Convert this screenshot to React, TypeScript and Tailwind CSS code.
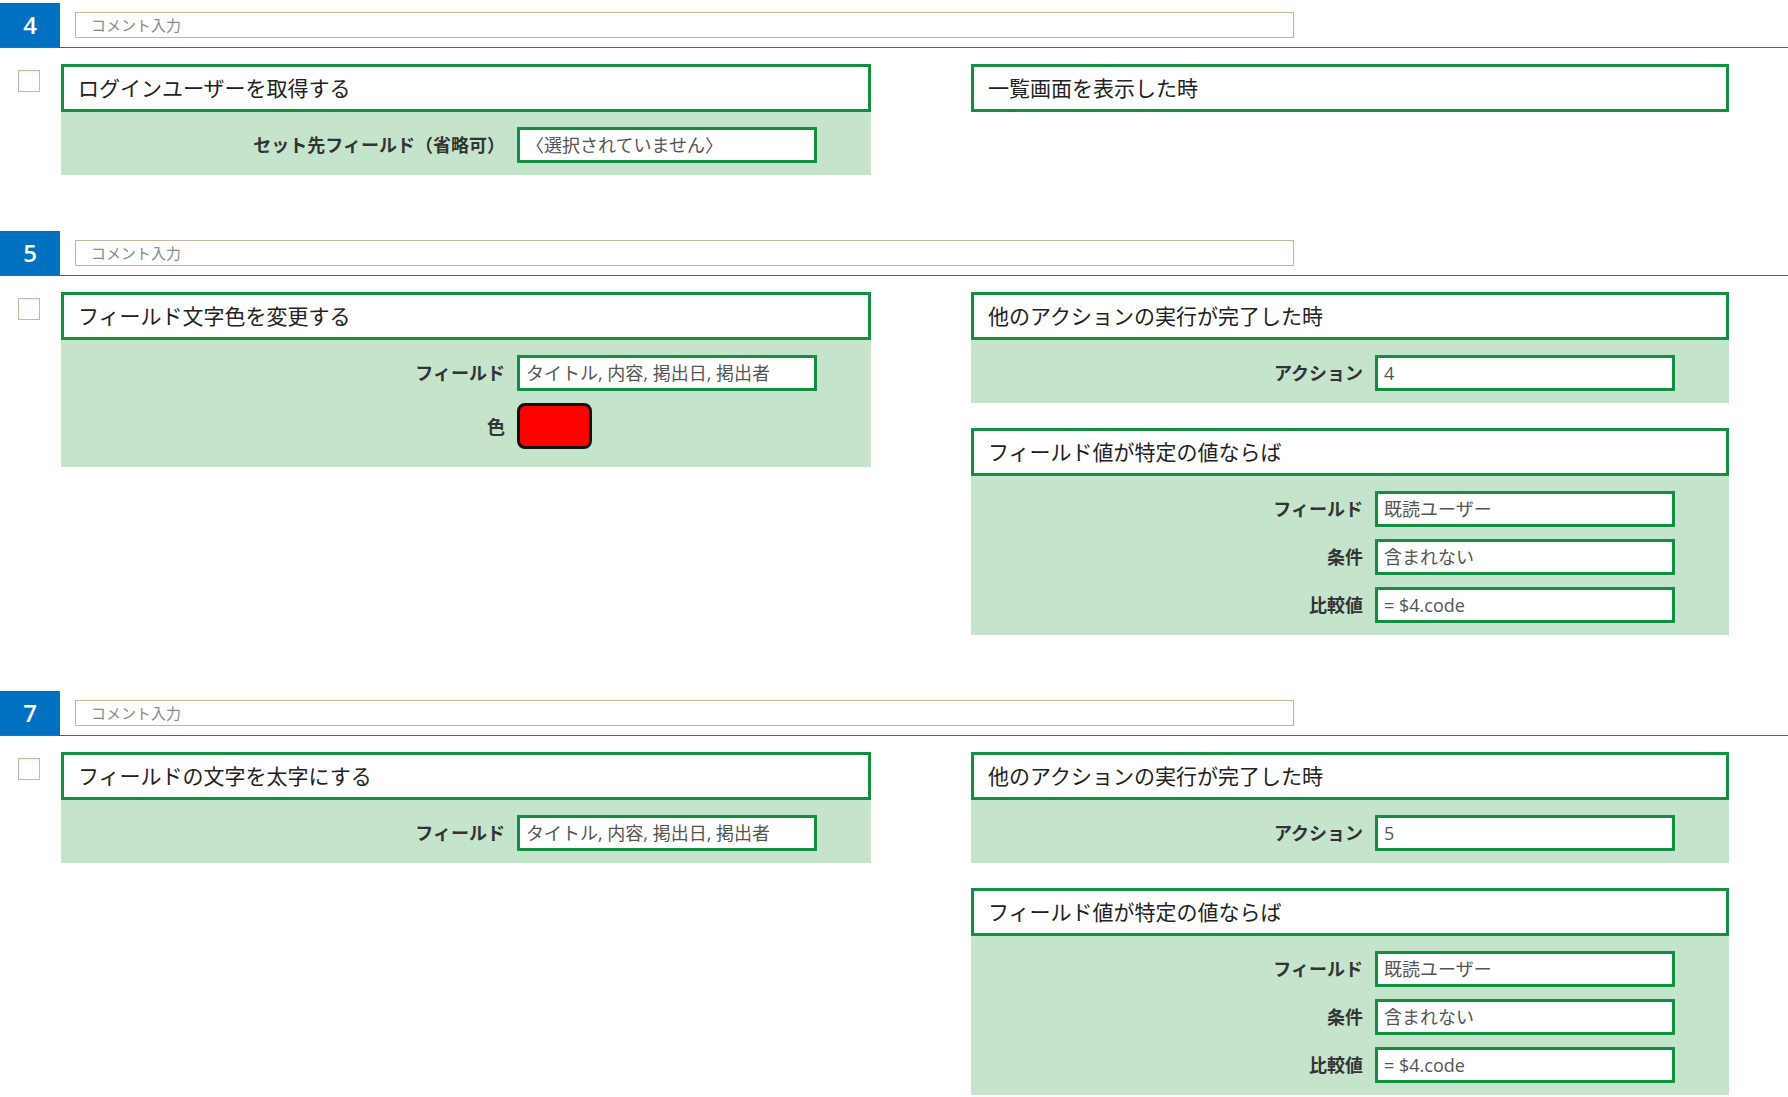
import React from "react";

type Row = { label: string; value?: string; color?: string };
type Card = { title: string; rows?: Row[] };
type Section = { no: string; left: Card[]; right: Card[] };

const FONT = { fontFamily: '"Open Sans", "Noto Sans CJK JP", sans-serif' };

const sections: Section[] = [
  {
    no: "4",
    left: [{ title: "ログインユーザーを取得する", rows: [{ label: "セット先フィールド（省略可）", value: "〈選択されていません〉" }] }],
    right: [{ title: "一覧画面を表示した時" }],
  },
  {
    no: "5",
    left: [
      {
        title: "フィールド文字色を変更する",
        rows: [
          { label: "フィールド", value: "タイトル, 内容, 掲出日, 掲出者" },
          { label: "色", color: "#ff0000" },
        ],
      },
    ],
    right: [
      { title: "他のアクションの実行が完了した時", rows: [{ label: "アクション", value: "4" }] },
      {
        title: "フィールド値が特定の値ならば",
        rows: [
          { label: "フィールド", value: "既読ユーザー" },
          { label: "条件", value: "含まれない" },
          { label: "比較値", value: "= $4.code" },
        ],
      },
    ],
  },
  {
    no: "7",
    left: [{ title: "フィールドの文字を太字にする", rows: [{ label: "フィールド", value: "タイトル, 内容, 掲出日, 掲出者" }] }],
    right: [
      { title: "他のアクションの実行が完了した時", rows: [{ label: "アクション", value: "5" }] },
      {
        title: "フィールド値が特定の値ならば",
        rows: [
          { label: "フィールド", value: "既読ユーザー" },
          { label: "条件", value: "含まれない" },
          { label: "比較値", value: "= $4.code" },
        ],
      },
    ],
  },
];

function RowView({ row }: { row: Row }) {
  if (row.color) {
    return (
      <div className="flex items-start gap-[12px] h-[52px] w-[300px] relative">
        <span className="absolute right-[312px] top-[13px] font-bold text-[18px] leading-[22px] text-[#333] whitespace-nowrap">
          {row.label}
        </span>
        <div
          className="w-[75px] h-[46px] rounded-[8px] border-[3px] border-[#111]"
          style={{ backgroundColor: row.color }}
        />
      </div>
    );
  }
  return (
    <div className="flex items-center gap-[12px]">
      <span className="font-bold text-[18px] leading-[22px] text-[#333] whitespace-nowrap">{row.label}</span>
      <div className="w-[300px] h-[36px] border-[3px] border-[#128f40] bg-white flex items-center pl-[6px] pt-[1px] text-[18px] text-[#555] whitespace-nowrap overflow-hidden">
        {row.value}
      </div>
    </div>
  );
}

function CardView({ card }: { card: Card }) {
  return (
    <div>
      <div className="h-[48px] border-[3px] border-[#128f40] bg-white flex items-center pl-[14px] pt-[2px] text-[21px] text-[#222] whitespace-nowrap">
        {card.title}
      </div>
      {card.rows && (
        <div className="bg-[#c4e5cc] pt-[15px] pb-[12px] pr-[54px] flex flex-col items-end gap-[12px]">
          {card.rows.map((r, i) => (
            <RowView key={i} row={r} />
          ))}
        </div>
      )}
    </div>
  );
}

function SectionView({ s }: { s: Section }) {
  return (
    <section className="mb-[56px]">
      <div className="flex items-center h-[45px] border-b border-[#1f6fb2]">
        <div className="w-[60px] h-[44px] bg-[#0070c0] text-white flex items-center justify-center text-[24px] font-semibold">
          {s.no}
        </div>
        <div className="ml-[15px] w-[1219px] h-[26px] border border-[#c8b49a] bg-white flex items-center pl-[15px] text-[15px] text-[#8a8a8a]">
          コメント入力
        </div>
      </div>
      <div className="flex mt-[16px]">
        <div className="w-[61px] pl-[18px] pt-[6px] shrink-0">
          <div className="w-[22px] h-[22px] border border-[#c9b8a3] bg-white shadow-[inset_0_1px_2px_rgba(0,0,0,0.08)]" />
        </div>
        <div className="w-[810px] shrink-0 flex flex-col gap-[25px]">
          {s.left.map((c, i) => (
            <CardView key={i} card={c} />
          ))}
        </div>
        <div className="ml-[100px] w-[758px] shrink-0 flex flex-col gap-[25px]">
          {s.right.map((c, i) => (
            <CardView key={i} card={c} />
          ))}
        </div>
      </div>
    </section>
  );
}

export default function App() {
  return (
    <div className="w-[1788px] h-[1097px] overflow-hidden bg-white pt-[3px]" style={FONT}>
      {sections.map((s) => (
        <SectionView key={s.no} s={s} />
      ))}
    </div>
  );
}
